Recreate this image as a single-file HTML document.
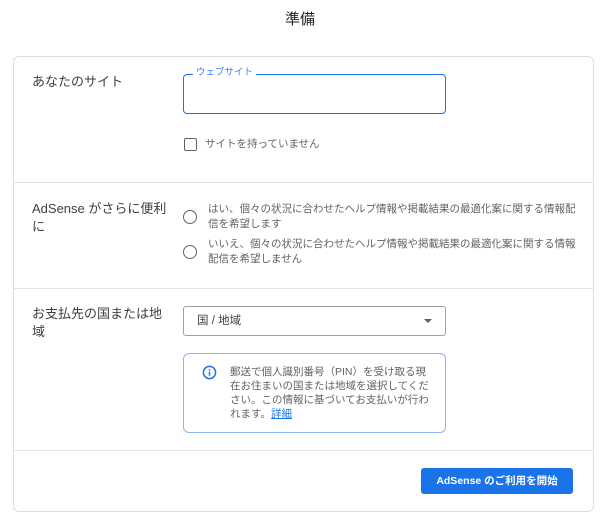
<!DOCTYPE html>
<html><head><meta charset="utf-8"><style>
*{margin:0;padding:0;box-sizing:border-box}
body{width:600px;height:523px;background:#fff;font-family:"Liberation Sans","Noto Sans CJK JP",sans-serif;color:#3c4043;position:relative;overflow:hidden}
.a{position:absolute;white-space:nowrap}
.card{position:absolute;left:13px;top:56px;width:581px;height:456px;border:1px solid #dadce0;border-radius:6px}
.hr{position:absolute;left:14px;width:579px;height:1px;background:#e3e3e3}
.lbl{font-size:13px;color:#3c4043;line-height:18px}
.rad{position:absolute;width:14px;height:14px;border:1.5px solid #5f6368;border-radius:50%}
.rt{font-size:10.5px;line-height:15px;color:#5f6368}
</style></head><body>
<div class="a" style="left:0;width:600px;text-align:center;top:8px;font-size:15px;color:#202124">準備</div>
<div class="card"></div>
<div class="a lbl" style="left:32px;top:73px">あなたのサイト</div>
<div class="a" style="left:183px;top:74px;width:263px;height:40px;border:1.5px solid #1a73e8;border-radius:4px"></div>
<div class="a" style="left:193px;top:67px;background:#fff;padding:0 3px;font-size:9.5px;color:#4285f4;line-height:12px">ウェブサイト</div>
<div class="a" style="left:184px;top:138px;width:13px;height:13px;border:1.5px solid #5f6368;border-radius:2px"></div>
<div class="a" style="left:205px;top:137px;font-size:10.5px;color:#5f6368;line-height:14px">サイトを持っていません</div>
<div class="hr" style="top:182px"></div>
<div class="a lbl" style="left:32px;top:200px">AdSense がさらに便利<br>に</div>
<div class="rad" style="left:183px;top:210px"></div>
<div class="a rt" style="left:208px;top:202px">はい、個々の状況に合わせたヘルプ情報や掲載結果の最適化案に関する情報配<br>信を希望します</div>
<div class="rad" style="left:183px;top:245px"></div>
<div class="a rt" style="left:208px;top:237px">いいえ、個々の状況に合わせたヘルプ情報や掲載結果の最適化案に関する情報<br>配信を希望しません</div>
<div class="hr" style="top:288px"></div>
<div class="a lbl" style="left:32px;top:305px">お支払先の国または地<br>域</div>
<div class="a" style="left:183px;top:306px;width:263px;height:30px;border:1px solid #9aa0a6;border-radius:3px"></div>
<div class="a" style="left:197px;top:313px;font-size:11.5px;color:#3c4043;line-height:16px">国 / 地域</div>
<div class="a" style="left:424px;top:319px;width:0;height:0;border-left:4px solid transparent;border-right:4px solid transparent;border-top:4px solid #5f6368"></div>
<div class="a" style="left:183px;top:353px;width:263px;height:80px;border:1px solid #8ab4f8;border-radius:6px"></div>
<svg class="a" style="left:202px;top:365px" width="15" height="15" viewBox="0 0 16 16"><circle cx="8" cy="8" r="6.5" fill="none" stroke="#1a73e8" stroke-width="1.6"/><rect x="7.2" y="7" width="1.6" height="4.5" fill="#1a73e8"/><rect x="7.2" y="4.3" width="1.6" height="1.6" fill="#1a73e8"/></svg>
<div class="a" style="left:230px;top:365px;font-size:10.5px;line-height:14px;color:#5f6368">郵送で個人識別番号（PIN）を受け取る現<br>在お住まいの国または地域を選択してくだ<br>さい。この情報に基づいてお支払いが行わ<br>れます。<span style="color:#1a73e8;text-decoration:underline">詳細</span></div>
<div class="hr" style="top:450px"></div>
<div class="a" style="left:421px;top:468px;width:152px;height:26px;background:#1a73e8;border-radius:3px;color:#fff;font-size:10.5px;font-weight:bold;text-align:center;line-height:26px">AdSense のご利用を開始</div>
</body></html>
